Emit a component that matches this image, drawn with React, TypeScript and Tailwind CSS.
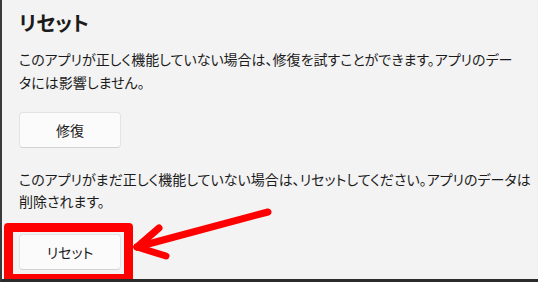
import React from "react";

const font = { fontFamily: '"Noto Sans CJK JP", "Noto Sans", sans-serif' };

function Btn({ label }: { label: string }) {
  return (
    <div className="w-[102px] h-[36px] rounded-[4px] bg-[#fbfbfb] border border-[#e3e3e3] border-b-[#d2d2d2] flex items-center justify-center text-[14px] text-[#1b1b1b] [font-feature-settings:'palt']">
      {label}
    </div>
  );
}

export default function App() {
  return (
    <div
      className="relative w-[538px] h-[282px] overflow-hidden bg-[#f3f3f3] border-l-2 border-l-[#3a3a3a] border-b-[3px] border-b-[#2b2b2b] text-[#1b1b1b]"
      style={font}
    >
      <div className="pl-[17px] pt-[9px] flex flex-col items-start [font-feature-settings:'palt']">
        <div className="text-[20px] leading-[28px] font-bold">リセット</div>
        <div className="mt-[11px] text-[14px] leading-[23px]">
          <div className="whitespace-nowrap">このアプリが正しく機能していない場合は、修復を試すことができます。アプリのデー</div>
          <div className="whitespace-nowrap">タには影響しません。</div>
        </div>
        <div className="mt-[18px]">
          <Btn label="修復" />
        </div>
        <div className="mt-[20px] text-[14px] leading-[22px]">
          <div className="whitespace-nowrap">このアプリがまだ正しく機能していない場合は、リセットしてください。アプリのデータは</div>
          <div className="whitespace-nowrap">削除されます。</div>
        </div>
        <div className="mt-[22px]">
          <Btn label="リセット" />
        </div>
      </div>
      <div className="absolute left-[2px] top-[223px] w-[129px] h-[60px] border-[9px] border-[#ff0000] rounded-[4px]" />
      <svg className="absolute left-0 top-0" width="538" height="282" viewBox="0 0 538 282">
        <g stroke="#ff0000" strokeWidth="7" strokeLinecap="round" strokeLinejoin="round" fill="none">
          <line x1="266" y1="212" x2="135" y2="247" />
          <line x1="135" y1="247" x2="157" y2="228" />
          <line x1="135" y1="247" x2="164" y2="256" />
        </g>
      </svg>
    </div>
  );
}
